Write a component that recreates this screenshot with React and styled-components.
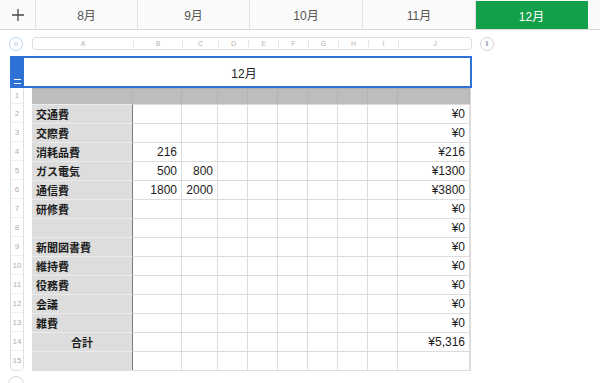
import React from 'react';
import styled, { createGlobalStyle } from 'styled-components';

const GlobalStyle = createGlobalStyle`
  html, body {
    margin: 0;
    padding: 0;
    background: #ffffff;
    overflow: hidden;
  }
  body {
    font-family: 'Liberation Sans', 'Noto Sans CJK JP', sans-serif;
    color: #222;
  }
`;

const FONT = `'Liberation Sans', 'Noto Sans CJK JP', sans-serif`;

const months = ['8月', '9月', '10月', '11月', '12月'];
const tabWidths = [102, 112, 113, 113, 112];
const colLetters = ['A', 'B', 'C', 'D', 'E', 'F', 'G', 'H', 'I', 'J'];
const colWidths = [101, 49, 36, 30, 30, 30, 30, 30, 30, 72];

const rows = [
  { label: '交通費', b: '', c: '', total: '¥0' },
  { label: '交際費', b: '', c: '', total: '¥0' },
  { label: '消耗品費', b: '216', c: '', total: '¥216' },
  { label: 'ガス電気', b: '500', c: '800', total: '¥1300' },
  { label: '通信費', b: '1800', c: '2000', total: '¥3800' },
  { label: '研修費', b: '', c: '', total: '¥0' },
  { label: '', b: '', c: '', total: '¥0' },
  { label: '新聞図書費', b: '', c: '', total: '¥0' },
  { label: '維持費', b: '', c: '', total: '¥0' },
  { label: '役務費', b: '', c: '', total: '¥0' },
  { label: '会議', b: '', c: '', total: '¥0' },
  { label: '雑費', b: '', c: '', total: '¥0' },
  { label: '合計', b: '', c: '', total: '¥5,316', center: true },
  { label: '', b: '', c: '', total: '' },
];

const TabBar = styled.div`
  display: flex;
  height: 29px;
  border-bottom: 1px solid #d9d9d9;
  background: #fafafa;
`;

const AddButton = styled.div`
  width: 35px;
  display: flex;
  align-items: center;
  justify-content: center;
  border-right: 1px solid #e2e2e2;
  color: #555;
`;

const Tab = styled.div`
  width: ${(p) => p.$w}px;
  flex: none;
  display: flex;
  align-items: center;
  justify-content: center;
  font-family: ${FONT};
  font-size: 12px;
  color: ${(p) => (p.$active ? '#ffffff' : '#555')};
  background: ${(p) => (p.$active ? '#14a04a' : 'transparent')};
  border-right: 1px solid ${(p) => (p.$active ? '#14a04a' : '#e2e2e2')};
  box-sizing: border-box;
  margin-top: ${(p) => (p.$active ? '1px' : '0')};
`;

const Sheet = styled.div`
  padding: 6px 0 0 9px;
`;

const HeaderRow = styled.div`
  display: flex;
  align-items: center;
  height: 15px;
`;

const RoundButton = styled.div`
  width: ${(p) => (p.$big ? 16 : 14)}px;
  height: ${(p) => (p.$big ? 16 : 14)}px;
  margin-left: ${(p) => p.$ml || 0}px;
  border-radius: 50%;
  border: 1px solid ${(p) => (p.$blue ? '#b8d3f2' : '#d6d6d6')};
  box-sizing: border-box;
  display: flex;
  align-items: center;
  justify-content: center;
  color: ${(p) => (p.$blue ? '#5b8fd0' : '#7f8fa8')};
  font-family: ${FONT};
  font-size: 8px;
  line-height: 1;
  flex: none;
`;

const ColumnBar = styled.div`
  display: flex;
  margin-left: 9px;
  height: 13px;
  border: 1px solid #dcdcdc;
  border-radius: 4px;
  box-sizing: border-box;
  overflow: hidden;
`;

const ColumnLetter = styled.div`
  width: ${(p) => p.$w}px;
  flex: none;
  display: flex;
  align-items: center;
  justify-content: center;
  font-family: ${FONT};
  font-size: 7px;
  color: #b5b5b5;
  box-sizing: border-box;
  border-right: ${(p) => (p.$last ? 'none' : '1px solid #e4e4e4')};
  margin: 2px 0;
`;

const TitleBox = styled.div`
  display: flex;
  margin: 5px 0 0 1px;
  width: 462px;
  height: 32px;
  border: 2px solid #2f72d6;
  border-left: none;
  box-sizing: border-box;
  position: relative;
  z-index: 2;
`;

const Handle = styled.div`
  width: 14px;
  background: #2f72d6;
  display: flex;
  align-items: flex-end;
  justify-content: center;
  padding-bottom: 2px;
  box-sizing: border-box;
`;

const HandleLines = styled.div`
  width: 7px;
  height: 3px;
  border-top: 1px solid #ffffff;
  border-bottom: 1px solid #ffffff;
`;

const TitleCell = styled.div`
  flex: 1;
  display: flex;
  align-items: center;
  justify-content: center;
  font-family: ${FONT};
  font-size: 12px;
  color: #222;
  padding-right: 6px;
`;

const Body = styled.div`
  display: flex;
  margin-top: -2px;
`;

const RowNumbers = styled.div`
  width: 14px;
  margin-left: 1px;
  border: 1px solid #e0e0e0;
  border-top: none;
  border-radius: 0 0 5px 5px;
  box-sizing: border-box;
  display: flex;
  flex-direction: column;
  padding-top: 2px;
`;

const RowNumber = styled.div`
  height: ${(p) => p.$h}px;
  display: flex;
  align-items: center;
  justify-content: center;
  font-family: ${FONT};
  font-size: 8px;
  color: #b0b0b0;
  border-bottom: ${(p) => (p.$last ? 'none' : '1px solid #f0f0f0')};
  box-sizing: border-box;
`;

const Grid = styled.div`
  margin-left: 8px;
  margin-top: 2px;
  display: grid;
  grid-template-columns: ${colWidths.map((w) => `${w}px`).join(' ')};
  grid-template-rows: 16px repeat(14, 19px);
  border-right: 1px solid #dcdcdc;
  border-bottom: 1px solid #dcdcdc;
  box-sizing: border-box;
  height: 283px;
`;

const Cell = styled.div`
  box-sizing: border-box;
  display: flex;
  align-items: center;
  justify-content: ${(p) => (p.$align === 'center' ? 'center' : p.$align === 'right' ? 'flex-end' : 'flex-start')};
  padding: 0 4px;
  font-family: ${FONT};
  font-size: ${(p) => (p.$bold ? '11px' : '12px')};
  font-weight: ${(p) => (p.$bold ? 700 : 400)};
  color: #1c1c1c;
  white-space: nowrap;
  background: ${(p) => (p.$kind === 'header' ? '#bdbdbd' : p.$kind === 'label' ? '#dddddd' : '#ffffff')};
  border-top: 1px solid ${(p) => (p.$kind === 'header' ? '#b0b0b0' : p.$kind === 'label' ? '#ebebeb' : '#dcdcdc')};
  border-right: 1px solid ${(p) => (p.$kind === 'label' ? '#7a7a7a' : p.$kind === 'header' ? '#b3b3b3' : '#dcdcdc')};
`;

const BottomRow = styled.div`
  margin: 5px 0 0 -1px;
`;

const PlusIcon = () => (
  <svg width="14" height="14" viewBox="0 0 14 14">
    <path d="M7 1v12M1 7h12" stroke="#4a4a4a" strokeWidth="1.3" fill="none" />
  </svg>
);

export default function App() {
  return (
    <>
      <GlobalStyle />
      <TabBar>
        <AddButton>
          <PlusIcon />
        </AddButton>
        {months.map((m, i) => (
          <Tab key={m} $w={tabWidths[i]} $active={i === months.length - 1}>
            {m}
          </Tab>
        ))}
      </TabBar>
      <Sheet>
        <HeaderRow>
          <RoundButton $blue>○</RoundButton>
          <ColumnBar>
            {colLetters.map((l, i) => (
              <ColumnLetter key={l} $w={colWidths[i]} $last={i === colLetters.length - 1}>
                {l}
              </ColumnLetter>
            ))}
          </ColumnBar>
          <RoundButton $ml={8}>ǁ</RoundButton>
        </HeaderRow>
        <TitleBox>
          <Handle>
            <HandleLines />
          </Handle>
          <TitleCell>12月</TitleCell>
        </TitleBox>
        <Body>
          <RowNumbers>
            {Array.from({ length: 15 }, (_, i) => (
              <RowNumber key={i} $h={i === 0 ? 16 : 19} $last={i === 14}>
                {i + 1}
              </RowNumber>
            ))}
          </RowNumbers>
          <Grid>
            {colWidths.map((_, c) => (
              <Cell key={`h${c}`} $kind="header" />
            ))}
            {rows.map((r, i) => (
              <React.Fragment key={i}>
                <Cell $kind="label" $bold $align={r.center ? 'center' : 'left'}>
                  {r.label}
                </Cell>
                <Cell $align="right">{r.b}</Cell>
                <Cell $align="right">{r.c}</Cell>
                {[0, 1, 2, 3, 4, 5].map((k) => (
                  <Cell key={k} />
                ))}
                <Cell $align="right">{r.total}</Cell>
              </React.Fragment>
            ))}
          </Grid>
        </Body>
        <BottomRow>
          <RoundButton $big />
        </BottomRow>
      </Sheet>
    </>
  );
}
